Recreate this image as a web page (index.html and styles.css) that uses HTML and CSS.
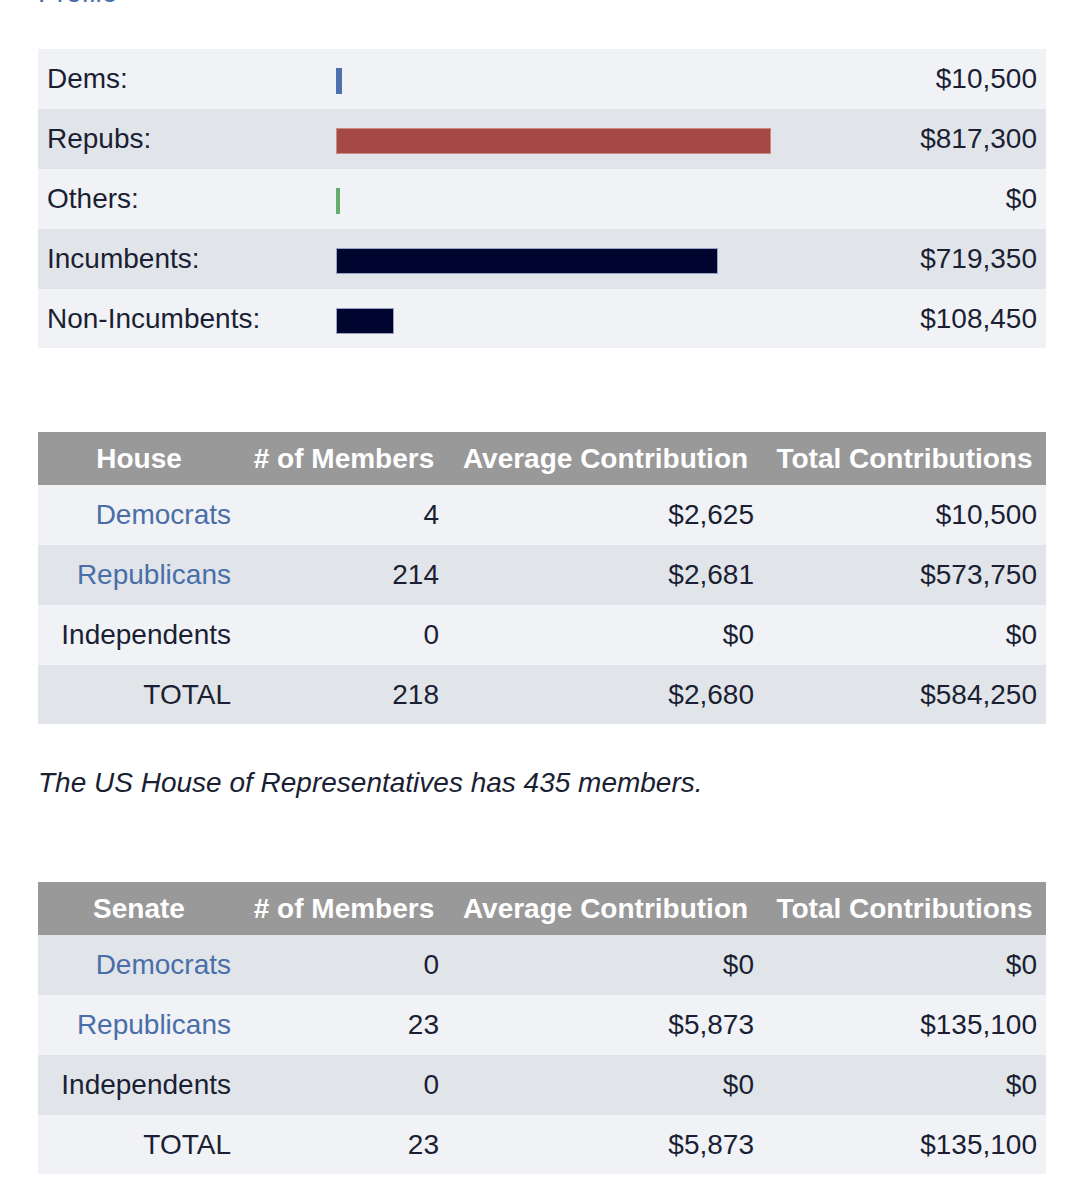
FILE: index.html
```html
<!DOCTYPE html>
<html>
<head>
<meta charset="utf-8">
<link rel="stylesheet" href="styles.css">
</head>
<body>
<div class="page">
  <a class="profile" href="#">Profile</a>

  <table class="bars">
    <tbody>
      <tr><td class="lbl">Dems:</td><td class="barcell"><span class="bar dem" style="width:6px"></span></td><td class="val">$10,500</td></tr>
      <tr><td class="lbl">Repubs:</td><td class="barcell"><span class="bar rep" style="width:435px"></span></td><td class="val">$817,300</td></tr>
      <tr><td class="lbl">Others:</td><td class="barcell"><span class="bar oth" style="width:4px"></span></td><td class="val">$0</td></tr>
      <tr><td class="lbl">Incumbents:</td><td class="barcell"><span class="bar inc" style="width:382px"></span></td><td class="val">$719,350</td></tr>
      <tr class="last"><td class="lbl">Non-Incumbents:</td><td class="barcell"><span class="bar inc" style="width:58px"></span></td><td class="val">$108,450</td></tr>
    </tbody>
  </table>

  <table class="members house">
    <colgroup><col class="c1"><col class="c2"><col class="c3"><col class="c4"></colgroup>
    <thead>
      <tr><th>House</th><th># of Members</th><th>Average Contribution</th><th>Total Contributions</th></tr>
    </thead>
    <tbody>
      <tr><td><a href="#">Democrats</a></td><td>4</td><td>$2,625</td><td>$10,500</td></tr>
      <tr><td><a href="#">Republicans</a></td><td>214</td><td>$2,681</td><td>$573,750</td></tr>
      <tr><td>Independents</td><td>0</td><td>$0</td><td>$0</td></tr>
      <tr class="last"><td>TOTAL</td><td>218</td><td>$2,680</td><td>$584,250</td></tr>
    </tbody>
  </table>

  <p class="note">The US House of Representatives has 435 members.</p>

  <table class="members senate">
    <colgroup><col class="c1"><col class="c2"><col class="c3"><col class="c4"></colgroup>
    <thead>
      <tr><th>Senate</th><th># of Members</th><th>Average Contribution</th><th>Total Contributions</th></tr>
    </thead>
    <tbody>
      <tr><td><a href="#">Democrats</a></td><td>0</td><td>$0</td><td>$0</td></tr>
      <tr><td><a href="#">Republicans</a></td><td>23</td><td>$5,873</td><td>$135,100</td></tr>
      <tr><td>Independents</td><td>0</td><td>$0</td><td>$0</td></tr>
      <tr class="last"><td>TOTAL</td><td>23</td><td>$5,873</td><td>$135,100</td></tr>
    </tbody>
  </table>
</div>
</body>
</html>
```

FILE: styles.css
```css
html, body {
  margin: 0;
  padding: 0;
  background: #ffffff;
}

body {
  font-family: "Liberation Sans", Arial, Helvetica, sans-serif;
  font-size: 28px;
  color: #1b1f33;
  overflow: hidden;
}

.page {
  width: 1008px;
  padding: 0 38px;
}

a {
  color: #4a6ea8;
  text-decoration: none;
}

.profile {
  display: block;
  height: 32px;
  line-height: 32px;
  margin-top: -23px;
}

table {
  border-collapse: collapse;
  width: 1008px;
  table-layout: fixed;
}

tbody tr:nth-child(odd) td {
  background: #f0f2f6;
}

tbody tr:nth-child(even) td {
  background: #e1e5ea;
}

.senate tbody tr:nth-child(odd) td {
  background: #e1e5ea;
}

.senate tbody tr:nth-child(even) td {
  background: #f0f2f6;
}

.bars {
  margin-top: 40px;
}

.bars td {
  height: 60px;
  padding: 0;
  vertical-align: middle;
}

.bars tr.last td,
.members tr.last td {
  height: 59px;
}

.bars .lbl {
  width: 289px;
  padding-left: 9px;
}

.bars .barcell {
  width: 500px;
}

.bars .val {
  text-align: right;
  padding-right: 9px;
}

.bar {
  display: block;
  height: 26px;
  margin-top: 4px;
  box-sizing: border-box;
}

.bar.dem { background: #4e70ad; }
.bar.rep { background: #a64843; border: 1px solid #c98a86; }
.bar.oth { background: #64ad6e; }
.bar.inc { background: #000530; border: 1px solid #9aa2c4; }

.members.house {
  margin-top: 84px;
}

.members .c1 { width: 202px; }
.members .c2 { width: 208px; }
.members .c3 { width: 315px; }
.members .c4 { width: 283px; }

.members th {
  background: #999999;
  color: #ffffff;
  font-weight: bold;
  height: 53px;
  padding: 0;
  text-align: center;
  vertical-align: middle;
  white-space: nowrap;
}

.members td {
  height: 60px;
  padding: 0 9px 0 0;
  text-align: right;
  vertical-align: middle;
  white-space: nowrap;
}

.note {
  font-style: italic;
  margin: 43px 0 83px 0;
  line-height: 32px;
}
```
